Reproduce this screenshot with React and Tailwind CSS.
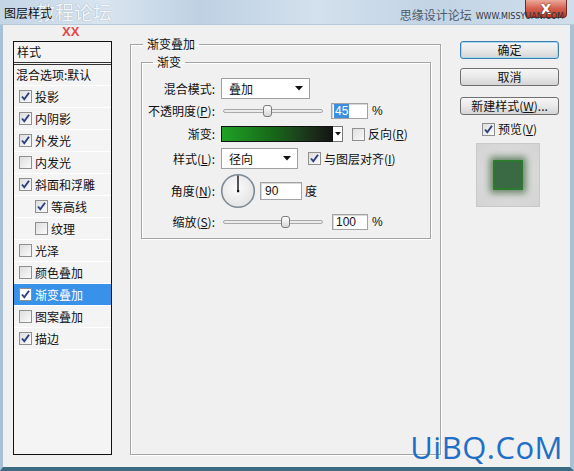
import React from 'react';

const items = [
  { label: '投影', checked: true },
  { label: '内阴影', checked: true },
  { label: '外发光', checked: true },
  { label: '内发光', checked: false },
  { label: '斜面和浮雕', checked: true },
  { label: '等高线', checked: true, sub: true },
  { label: '纹理', checked: false, sub: true },
  { label: '光泽', checked: false },
  { label: '颜色叠加', checked: false },
  { label: '渐变叠加', checked: true, active: true },
  { label: '图案叠加', checked: false },
  { label: '描边', checked: true },
];

const Check = ({ checked, white }) => (
  <span
    className={`inline-flex w-[13px] h-[13px] shrink-0 items-center justify-center border border-[#8f8f8f] ${
      white ? 'bg-white' : 'bg-gradient-to-br from-[#dedede] to-[#fafafa]'
    }`}
  >
    {checked && (
      <svg width="11" height="11" viewBox="0 0 11 11">
        <path d="M2 5.5 L4.3 8.3 L9 1.8" fill="none" stroke="#2b3f7e" strokeWidth="1.9" />
      </svg>
    )}
  </span>
);

const Arrow = () => (
  <svg width="8" height="5" viewBox="0 0 8 5" className="shrink-0">
    <path d="M0 0 H8 L4 4.5 Z" fill="#111" />
  </svg>
);

const Slider = ({ pos }) => (
  <div className="relative w-[102px] h-[16px] flex items-center pl-[2px]">
    <div className="w-full h-[4px] rounded-full border border-[#a9a9a9] bg-[#ebebeb]" />
    <div
      className="absolute top-[2px] w-[9px] h-[12px] rounded-[3px] border border-[#7a7a7a] bg-gradient-to-b from-white to-[#d6d6d6]"
      style={{ left: pos }}
    />
  </div>
);

const Btn = ({ children, focus, mt }) => (
  <div
    className={`w-[99px] h-[18px] flex items-center justify-center rounded-[3px] border bg-gradient-to-b from-[#f6f6f6] via-[#e9e9e9] to-[#d4d4d4] ${mt} ${
      focus ? 'border-[#3c7fb1] shadow-[inset_0_0_0_1px_#a8d8f0]' : 'border-[#707070]'
    }`}
  >
    {children}
  </div>
);

const Field = ({ children }) => (
  <span className="h-[16px] flex items-center bg-white border border-[#a3a3a3] shadow-[inset_1px_1px_0_#d8d8d8]">
    {children}
  </span>
);

export default function App() {
  return (
    <div className="relative w-[574px] h-[471px] overflow-hidden flex flex-col bg-[#f0f0f0] text-[12px] leading-[14px] text-[#111] font-['Noto_Sans_CJK_SC',sans-serif]">
      {/* title bar */}
      <div className="relative h-[25px] shrink-0 flex items-center bg-[linear-gradient(90deg,#c4d5e6_0%,#d9e5f0_18%,#bed1e3_35%,#d3e0ed_55%,#c2d4e5_75%,#d0deeb_100%)] border-b border-[#b7c8d8]">
        <span className="absolute left-[36px] top-[1px] z-0 text-[19px] leading-[22px] text-[#f4f7fa] [text-shadow:0_0_1px_#7f93a6]">
          教程论坛
        </span>
        <span className="relative z-10 pl-[4px] pt-[1px]">图层样式</span>
        <div className="absolute right-[7px] top-0 z-0 w-[42px] h-[18px] rounded-b-[4px] border border-t-0 border-[#6e2b25] bg-gradient-to-b from-[#eaa99b] via-[#d45f4e] to-[#c0392b] flex items-center justify-center">
          <span className="text-white font-bold text-[14px] leading-none font-['DejaVu_Sans',sans-serif] [text-shadow:0_0_2px_#5a1a14]">
            X
          </span>
        </div>
        <span className="relative z-10 ml-auto pt-[6px] text-[#505a64]">思缘设计论坛</span>
        <span className="relative z-20 ml-[4px] mr-[10px] pt-[9px] text-[8px] leading-[10px] text-[#2e343c] font-['DejaVu_Sans',sans-serif]">
          WWW.MISSYUAN.COM
        </span>
      </div>

      {/* body */}
      <div className="relative flex-1 flex items-start border-l-[3px] border-r-[4px] border-b-[4px] border-l-[#a9c1d6] border-r-[#a9c1d6] border-b-[#3b6b83]">
        <span className="absolute left-[59px] top-[0px] text-[13px] font-bold leading-[14px] text-[#e24b4b] font-['Liberation_Sans',sans-serif]">
          XX
        </span>

        {/* style list */}
        <div className="ml-[10px] mt-[16px] w-[99px] h-[414px] shrink-0 border border-[#111] bg-[#f4f4f4]">
          <div className="h-[21px] flex items-center pl-[3px] border-b border-[#333]">样式</div>
          <div className="h-[1px] mt-[1px] bg-[#333]" />
          <div className="h-[21px] flex items-center pl-[2px] border-b border-white">混合选项:默认</div>
          {items.map((it) => (
            <div
              key={it.label}
              className={`h-[22px] flex items-center gap-[3px] border-b border-white ${it.sub ? 'pl-[21px]' : 'pl-[5px]'} ${
                it.active ? 'bg-[#3892ea] text-white' : ''
              }`}
            >
              <Check checked={it.checked} white={it.active} />
              <span>{it.label}</span>
            </div>
          ))}
        </div>

        {/* main panel */}
        <fieldset className="ml-[18px] mt-[12px] w-[311px] h-[418px] shrink-0 border border-[#a5a5a5] shadow-[inset_1px_1px_0_#fff,1px_1px_0_#fff]">
          <legend className="ml-[12px] px-[4px]">渐变叠加</legend>
          <fieldset className="ml-[10px] mt-[4px] w-[290px] pb-[8px] border border-[#a5a5a5] shadow-[inset_1px_1px_0_#fff,1px_1px_0_#fff]">
            <legend className="ml-[11px] px-[4px]">渐变</legend>

            <div className="mt-[9px] h-[21px] flex items-center">
              <span className="w-[73px] text-right">混合模式:</span>
              <div className="ml-[6px] w-[89px] h-[21px] flex items-center justify-between pl-[7px] pr-[6px] bg-white border border-[#a0a0a0]">
                <span>叠加</span>
                <Arrow />
              </div>
            </div>

            <div className="mt-[3px] h-[17px] flex items-center">
              <span className="w-[73px] text-right whitespace-nowrap">
                不透明度(<u>P</u>):
              </span>
              <div className="ml-[6px]">
                <Slider pos={42} />
              </div>
              <div className="ml-[8px] w-[37px]">
                <Field>
                  <span className="ml-[2px] px-[1px] bg-[#3d8ee0] text-white font-['Liberation_Sans',sans-serif]">45</span>
                </Field>
              </div>
              <span className="ml-[4px] font-['Liberation_Sans',sans-serif]">%</span>
            </div>

            <div className="mt-[7px] h-[16px] flex items-center">
              <span className="w-[73px] text-right">渐变:</span>
              <div className="ml-[6px] flex h-[16px]">
                <div className="w-[112px] h-[16px] border border-[#111] bg-gradient-to-r from-[#1fa226] via-[#166318] to-[#141414]" />
                <div className="w-[10px] h-[16px] border border-l-0 border-[#777] bg-white flex items-center justify-center">
                  <svg width="6" height="4" viewBox="0 0 6 4">
                    <path d="M0 0 H6 L3 3.5 Z" fill="#111" />
                  </svg>
                </div>
              </div>
              <div className="ml-[9px] flex items-center gap-[3px]">
                <Check checked={false} />
                <span>
                  反向(<u>R</u>)
                </span>
              </div>
            </div>

            <div className="mt-[6px] h-[21px] flex items-center">
              <span className="w-[73px] text-right">
                样式(<u>L</u>):
              </span>
              <div className="ml-[6px] w-[77px] h-[21px] flex items-center justify-between pl-[7px] pr-[6px] bg-white border border-[#a0a0a0]">
                <span>径向</span>
                <Arrow />
              </div>
              <div className="ml-[10px] flex items-center gap-[3px]">
                <Check checked />
                <span>
                  与图层对齐(<u>I</u>)
                </span>
              </div>
            </div>

            <div className="mt-[4px] h-[35px] flex items-center">
              <span className="w-[73px] text-right">
                角度(<u>N</u>):
              </span>
              <svg width="36" height="36" viewBox="0 0 36 36" className="ml-[5px]">
                <defs>
                  <radialGradient id="dial" cx="45%" cy="40%" r="60%">
                    <stop offset="0%" stopColor="#fbfbfb" />
                    <stop offset="100%" stopColor="#e4e4e4" />
                  </radialGradient>
                </defs>
                <circle cx="18" cy="18" r="16.3" fill="url(#dial)" stroke="#7d8a96" strokeWidth="1.6" />
                <line x1="18" y1="18" x2="18" y2="2.5" stroke="#111" strokeWidth="1.4" />
                <rect x="17" y="17" width="2.2" height="2.2" fill="#111" />
              </svg>
              <div className="ml-[4px] w-[42px] h-[18px] flex items-center pl-[4px] bg-white border border-[#a3a3a3] shadow-[inset_1px_1px_0_#d8d8d8] font-['Liberation_Sans',sans-serif]">
                90
              </div>
              <span className="ml-[3px]">度</span>
            </div>

            <div className="mt-[6px] h-[16px] flex items-center">
              <span className="w-[73px] text-right">
                缩放(<u>S</u>):
              </span>
              <div className="ml-[6px]">
                <Slider pos={60} />
              </div>
              <div className="ml-[9px] w-[36px]">
                <Field>
                  <span className="ml-[3px] font-['Liberation_Sans',sans-serif]">100</span>
                </Field>
              </div>
              <span className="ml-[4px] font-['Liberation_Sans',sans-serif]">%</span>
            </div>
          </fieldset>
        </fieldset>

        {/* buttons */}
        <div className="ml-[19px] mt-[16px] w-[99px] shrink-0 flex flex-col">
          <Btn focus mt="">确定</Btn>
          <Btn mt="mt-[9px]">取消</Btn>
          <Btn mt="mt-[11px]">
            新建样式(<u>W</u>)...
          </Btn>
          <div className="mt-[7px] h-[14px] flex items-center justify-center gap-[3px]">
            <Check checked />
            <span>
              预览(<u>V</u>)
            </span>
          </div>
          <div className="mt-[7px] ml-[16px] w-[64px] h-[64px] flex items-center justify-center border border-[#c9c9c9] bg-[radial-gradient(circle,#e2e2e2_0%,#d3d3d3_100%)]">
            <div className="w-[30px] h-[30px] border-2 border-[#2b7a2e] bg-[#3a6a43] shadow-[0_0_7px_3px_rgba(20,70,20,0.6)]" />
          </div>
        </div>

        <span className="absolute right-[7px] bottom-[2px] text-[31px] leading-[36px] text-[#1f6fc6] font-['Open_Sans',sans-serif] tracking-[0.5px]">
          UiBQ.CoM
        </span>
      </div>
    </div>
  );
}
